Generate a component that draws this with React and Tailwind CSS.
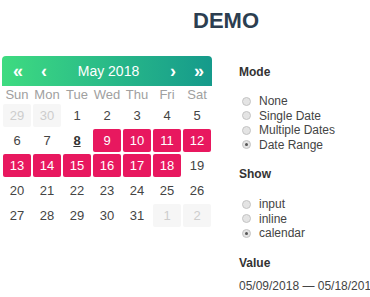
import { useState } from 'react'

const DAYS = ['Sun', 'Mon', 'Tue', 'Wed', 'Thu', 'Fri', 'Sat']

// May 2018 grid, outside-month days flagged
const WEEKS = [
  [[29, 'out'], [30, 'out'], [1], [2], [3], [4], [5]],
  [[6], [7], [8, 'today'], [9, 'sel'], [10, 'sel'], [11, 'sel'], [12, 'sel']],
  [[13, 'sel'], [14, 'sel'], [15, 'sel'], [16, 'sel'], [17, 'sel'], [18, 'sel'], [19]],
  [[20], [21], [22], [23], [24], [25], [26]],
  [[27], [28], [29], [30], [31], [1, 'out'], [2, 'out']],
]

function Radio({ label, checked }) {
  return (
    <label className="flex items-center h-[14.5px]">
      <span className="ml-[3px] w-[9px] h-[9px] rounded-full border border-[#c4c4c4] bg-[#e4e4e4] flex items-center justify-center shrink-0">
        {checked && <span className="w-[3px] h-[3px] rounded-full bg-[#555]" />}
      </span>
      <span className="ml-[8px] text-[12px] text-[#444]">{label}</span>
    </label>
  )
}

function Calendar() {
  return (
    <div className="w-[210px] ml-[2px] shrink-0">
      <div className="h-[30px] rounded-t-[4px] bg-gradient-to-r from-[#3edb80] to-[#159a8b] flex items-center text-white">
        <span className="ml-[3px] w-[26px] text-center text-[18px] font-bold leading-none">«</span>
        <span className="w-[26px] text-center text-[18px] font-bold leading-none">‹</span>
        <span className="flex-1 text-center text-[14px] leading-none">May 2018</span>
        <span className="w-[26px] text-center text-[18px] font-bold leading-none">›</span>
        <span className="w-[26px] text-center text-[18px] font-bold leading-none">»</span>
      </div>
      <div className="grid grid-cols-7 h-[17px] items-center text-[13px] text-[#a0a0a0]">
        {DAYS.map(d => (
          <div key={d} className="text-center leading-none">{d}</div>
        ))}
      </div>
      {WEEKS.map((week, i) => (
        <div key={i} className="grid grid-cols-7">
          {week.map(([n, kind], j) => {
            let cls = 'text-[#444]'
            if (kind === 'out') cls = 'bg-[#f6f6f6] text-[#cdcdcd]'
            if (kind === 'sel') cls = 'bg-[#e8185f] text-white'
            if (kind === 'today') cls = 'text-[#333] font-bold underline'
            return (
              <div
                key={j}
                className={`m-px h-[23px] rounded-[2px] flex items-center justify-center text-[13px] ${cls}`}
              >
                {n}
              </div>
            )
          })}
        </div>
      ))}
    </div>
  )
}

export default function App() {
  const [mode] = useState('range')
  const [show] = useState('calendar')

  return (
    <div className="w-[370px] h-[297px] overflow-hidden bg-white font-['Liberation_Sans',Arial,sans-serif]">
      <h1 className="pt-[8px] pl-[82px] text-center text-[22px] leading-[25px] font-bold text-[#2c3e50]">DEMO</h1>
      <div className="flex mt-[23px]">
        <Calendar />
        <div className="ml-[27px] pt-[8px] whitespace-nowrap shrink-0">
          <p className="text-[12px] leading-[16px] font-bold text-[#333]">Mode</p>
          <div className="mt-[14px]">
            <Radio label="None" checked={mode === 'none'} />
            <Radio label="Single Date" checked={mode === 'single'} />
            <Radio label="Multiple Dates" checked={mode === 'multiple'} />
            <Radio label="Date Range" checked={mode === 'range'} />
          </div>
          <p className="mt-[14px] text-[12px] leading-[16px] font-bold text-[#333]">Show</p>
          <div className="mt-[15px]">
            <Radio label="input" checked={show === 'input'} />
            <Radio label="inline" checked={show === 'inline'} />
            <Radio label="calendar" checked={show === 'calendar'} />
          </div>
          <p className="mt-[14px] text-[12px] leading-[16px] font-bold text-[#333]">Value</p>
          <p className="mt-[7px] text-[12px] leading-[16px] text-[#444]">05/09/2018 — 05/18/2018</p>
        </div>
      </div>
    </div>
  )
}
